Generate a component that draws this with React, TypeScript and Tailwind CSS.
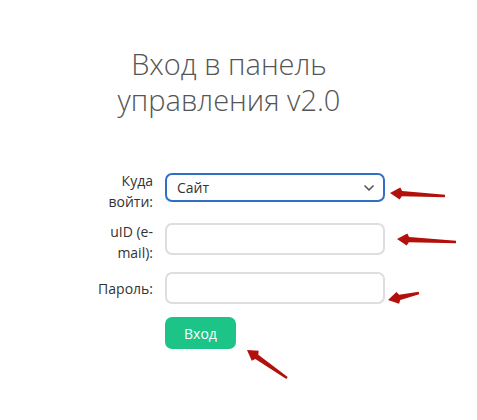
import { ChevronDown } from 'lucide-react';

type Arrow = { tx: number; ty: number; px: number; py: number };

const arrows: Arrow[] = [
  { tx: 445, ty: 196, px: 390, py: 193 },
  { tx: 456, ty: 242, px: 397, py: 239 },
  { tx: 419, ty: 293, px: 388, py: 300 },
  { tx: 287, ty: 378, px: 247, py: 350 },
];

function arrowPoints({ tx, ty, px, py }: Arrow) {
  const dx = px - tx;
  const dy = py - ty;
  const len = Math.hypot(dx, dy);
  const ux = dx / len;
  const uy = dy / len;
  const nx = -uy;
  const ny = ux;
  const headLen = 12;
  const headW = 6;
  const w0 = 2.6;
  const w1 = 1.2;
  const bx = px - ux * headLen;
  const by = py - uy * headLen;
  const pts = [
    [tx + nx * w1, ty + ny * w1],
    [bx + nx * w0, by + ny * w0],
    [bx + ux * 2 + nx * headW, by + uy * 2 + ny * headW],
    [px, py],
    [bx + ux * 2 - nx * headW, by + uy * 2 - ny * headW],
    [bx - nx * w0, by - ny * w0],
    [tx - nx * w1, ty - ny * w1],
  ];
  return pts.map((p) => p.join(',')).join(' ');
}

export default function App() {
  return (
    <div
      className="relative w-full h-[420px] bg-white overflow-hidden"
      style={{ fontFamily: '"Open Sans", "Noto Sans", sans-serif' }}
    >
      <h1 className="w-[458px] pt-[46px] text-center text-[29px] leading-[36px] font-light text-[#555]">
        Вход в панель
        <br />
        управления v2.0
      </h1>

      <form className="ml-[90px] mt-[52px] text-[14px] text-[#333]">
        <div className="flex items-start gap-3">
          <label className="w-[63px] text-right leading-[21px]">Куда войти:</label>
          <div className="mt-[3px] w-[220px] h-[29px] flex items-center justify-between border-2 border-[#2f6fc6] rounded-[7px] pl-[10px] pr-[6px]">
            <span>Сайт</span>
            <ChevronDown size={16} strokeWidth={2.5} className="text-[#555]" />
          </div>
        </div>

        <div className="mt-[9px] flex items-start gap-3">
          <label className="w-[63px] text-right leading-[21px]">uID (e-mail):</label>
          <input
            type="text"
            className="mt-[2px] w-[220px] h-[32px] border-2 border-[#dedede] rounded-[7px] outline-none px-2"
          />
        </div>

        <div className="mt-[9px] flex items-start gap-3">
          <label className="w-[63px] mt-[6px] text-right leading-[21px]">Пароль:</label>
          <input
            type="password"
            className="w-[220px] h-[32px] border-2 border-[#dedede] rounded-[7px] outline-none px-2"
          />
        </div>

        <div className="mt-[13px] ml-[75px]">
          <button
            type="button"
            className="w-[71px] h-[32px] rounded-[7px] bg-[#1cc488] text-white text-[14px]"
          >
            Вход
          </button>
        </div>
      </form>

      <svg className="absolute inset-0 pointer-events-none" width="477" height="420">
        {arrows.map((a, i) => (
          <polygon key={i} points={arrowPoints(a)} fill="#b3100c" strokeLinejoin="round" />
        ))}
      </svg>
    </div>
  );
}
